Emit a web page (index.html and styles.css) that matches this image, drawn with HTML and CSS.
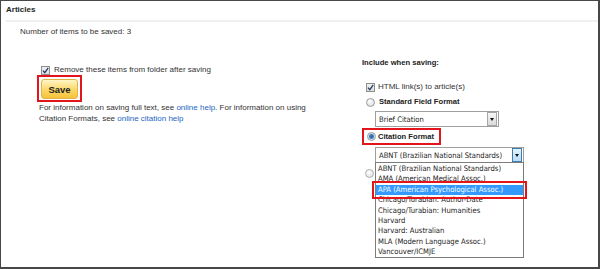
FILE: index.html
```html
<!DOCTYPE html>
<html lang="en">
<head>
    <meta charset="UTF-8">
    <title>Save Articles</title>
    <link rel="stylesheet" href="styles.css">
</head>
<body>
    <div class="panel">
        <div class="panel-head">Articles</div>
        <p class="count">Number of items to be saved: 3</p>

        <div class="columns">
            <div class="save-col">
                <label class="check-row remove-row">
                    <span class="box"><svg width="7" height="7" viewBox="0 0 7 7"><path d="M1 3.6 L2.8 5.6 L6.2 0.8" fill="none" stroke="#2b3d66" stroke-width="1.3"/></svg></span>
                    Remove these items from folder after saving
                </label>
                <div class="mark save-mark"><button class="save-btn">Save</button></div>
                <p class="help">For information on saving full text, see <a href="#">online help</a>. For information on using Citation Formats, see <a href="#">online citation help</a></p>
            </div>

            <div class="options-col">
                <h3 class="options-title">Include when saving:</h3>
                <label class="check-row html-row">
                    <span class="box"><svg width="7" height="7" viewBox="0 0 7 7"><path d="M1 3.6 L2.8 5.6 L6.2 0.8" fill="none" stroke="#2b3d66" stroke-width="1.3"/></svg></span>
                    HTML link(s) to article(s)
                </label>
                <label class="radio-row">
                    <span class="radio"></span>
                    <b>Standard Field Format</b>
                </label>
                <div class="select select-brief">
                    <span>Brief Citation</span>
                    <span class="arrow"></span>
                </div>
                <label class="radio-row mark format-mark">
                    <span class="radio on"></span>
                    <b>Citation Format</b>
                </label>
                <div class="format-wrap">
                    <div class="select select-format">
                        <span>ABNT (Brazilian National Standards)</span>
                        <span class="arrow"></span>
                    </div>
                    <span class="radio third"></span>
                    <ul class="dropdown">
                        <li>ABNT (Brazilian National Standards)</li>
                        <li>AMA (American Medical Assoc.)</li>
                        <li class="picked">APA (American Psychological Assoc.)</li>
                        <li>Chicago/Turabian: Author-Date</li>
                        <li>Chicago/Turabian: Humanities</li>
                        <li>Harvard</li>
                        <li>Harvard: Australian</li>
                        <li>MLA (Modern Language Assoc.)</li>
                        <li>Vancouver/ICMJE</li>
                    </ul>
                </div>
            </div>
        </div>
    </div>
</body>
</html>
```

FILE: styles.css
```css
body {
    margin: 0;
    background-color: white;
}
.panel {
    width: 600px;
    height: 269px;
    box-sizing: border-box;
    border: solid #474747;
    border-width: 1px 2px 2px 1px;
    background-color: white;
    font-family: "Liberation Sans", Arial, sans-serif;
    font-size: 8px;
    color: #333;
}
.panel-head {
    margin-left: 5px;
    height: 16px;
    padding-top: 3px;
    line-height: 12px;
    font-weight: bold;
    color: #222;
    border-bottom: 2px solid #f0f0f0;
}
.count {
    margin: 4px 0 0 19px;
    line-height: 11px;
}
.columns {
    display: flex;
}
.save-col {
    width: 290px;
    margin-left: 36px;
    padding-top: 28px;
}
.options-col {
    margin-left: 35px;
    padding-top: 20px;
}
.check-row,
.radio-row {
    display: flex;
    align-items: center;
    height: 10px;
    line-height: 10px;
    padding-left: 4px;
}
.box {
    width: 7px;
    height: 7px;
    border: 1px solid #8f8f8f;
    background: linear-gradient(#f0f0f0, #dedede);
    margin-right: 4px;
    display: flex;
}
.html-row .box {
    margin-right: 3px;
}
.radio {
    width: 7px;
    height: 7px;
    border: 1px solid #9a9a9a;
    border-radius: 50%;
    background: radial-gradient(circle at 40% 35%, #ffffff, #d4d4d4);
    margin-right: 4px;
    display: block;
    box-sizing: content-box;
}
.radio.on {
    background: radial-gradient(circle, #2e5f93 0, #3e7fc0 2px, #cfdde9 3px, #eeeeee 4px);
    margin-right: 2px;
}
.mark {
    border: 2px solid #e3141b;
}
.save-mark {
    display: inline-block;
    padding: 2px 2px 1px 2px;
    vertical-align: top;
}
.save-btn {
    display: block;
    width: 37px;
    height: 20px;
    padding: 0;
    border: 1px solid #e1b44a;
    border-radius: 3px;
    background: linear-gradient(#fff6c6, #fbd45f 60%, #f6c33c);
    font-family: "Liberation Sans", Arial, sans-serif;
    font-size: 9.5px;
    font-weight: bold;
    color: #222;
}
.help {
    width: 285px;
    margin: 0;
    padding-left: 2px;
    line-height: 11px;
}
.help a {
    color: #2566c2;
    text-decoration: none;
}
.options-title {
    margin: 0;
    font-size: 7.6px;
    line-height: 11px;
    color: #222;
}
.html-row {
    margin-top: 14px;
}
.radio-row {
    margin-top: 5px;
}
.radio-row b {
    font-size: 7.6px;
    color: #222;
}
.select {
    display: flex;
    align-items: center;
    justify-content: space-between;
    box-sizing: border-box;
    height: 16px;
    margin-left: 13px;
    padding: 0 1px 0 3px;
    border: 1px solid #a0a0a0;
    background-color: white;
    font-family: "DejaVu Sans Condensed", "DejaVu Sans", sans-serif;
    font-stretch: condensed;
    font-size: 7.6px;
    color: #222;
}
.select-brief {
    width: 124px;
    margin-top: 4px;
}
.arrow {
    width: 8px;
    height: 12px;
    border: 1px solid #a6a6a6;
    background: linear-gradient(#f7f7f7, #dadada);
    position: relative;
}
.arrow::after {
    content: "";
    position: absolute;
    left: 2px;
    top: 5px;
    border-left: 2px solid transparent;
    border-right: 2px solid transparent;
    border-top: 3px solid #111;
}
.format-mark {
    width: 79px;
    height: 17px;
    box-sizing: border-box;
    margin-top: 1px;
    padding-left: 3px;
}
.format-wrap {
    position: relative;
    margin-top: 2px;
}
.select-format {
    width: 149px;
}
.select-format .arrow {
    border-color: #3c7db3;
    background: linear-gradient(#e3f2fd, #b9dcf6);
}
.third {
    margin: 6px 0 0 3px;
    opacity: 0.8;
}
.dropdown {
    position: absolute;
    top: 15px;
    left: 13px;
    width: 149px;
    height: 96px;
    box-sizing: border-box;
    margin: 0;
    padding: 1px 0;
    list-style: none;
    border: 1px solid #7c7c7c;
    background-color: white;
    font-family: "DejaVu Sans Condensed", "DejaVu Sans", sans-serif;
    font-stretch: condensed;
    font-size: 7.6px;
    line-height: 10.4px;
    color: #222;
}
.dropdown li {
    padding-left: 2px;
    white-space: nowrap;
}
.dropdown .picked {
    background-color: #3399ff;
    color: white;
    outline: 2px solid #e3141b;
    outline-offset: 2px;
}
```
